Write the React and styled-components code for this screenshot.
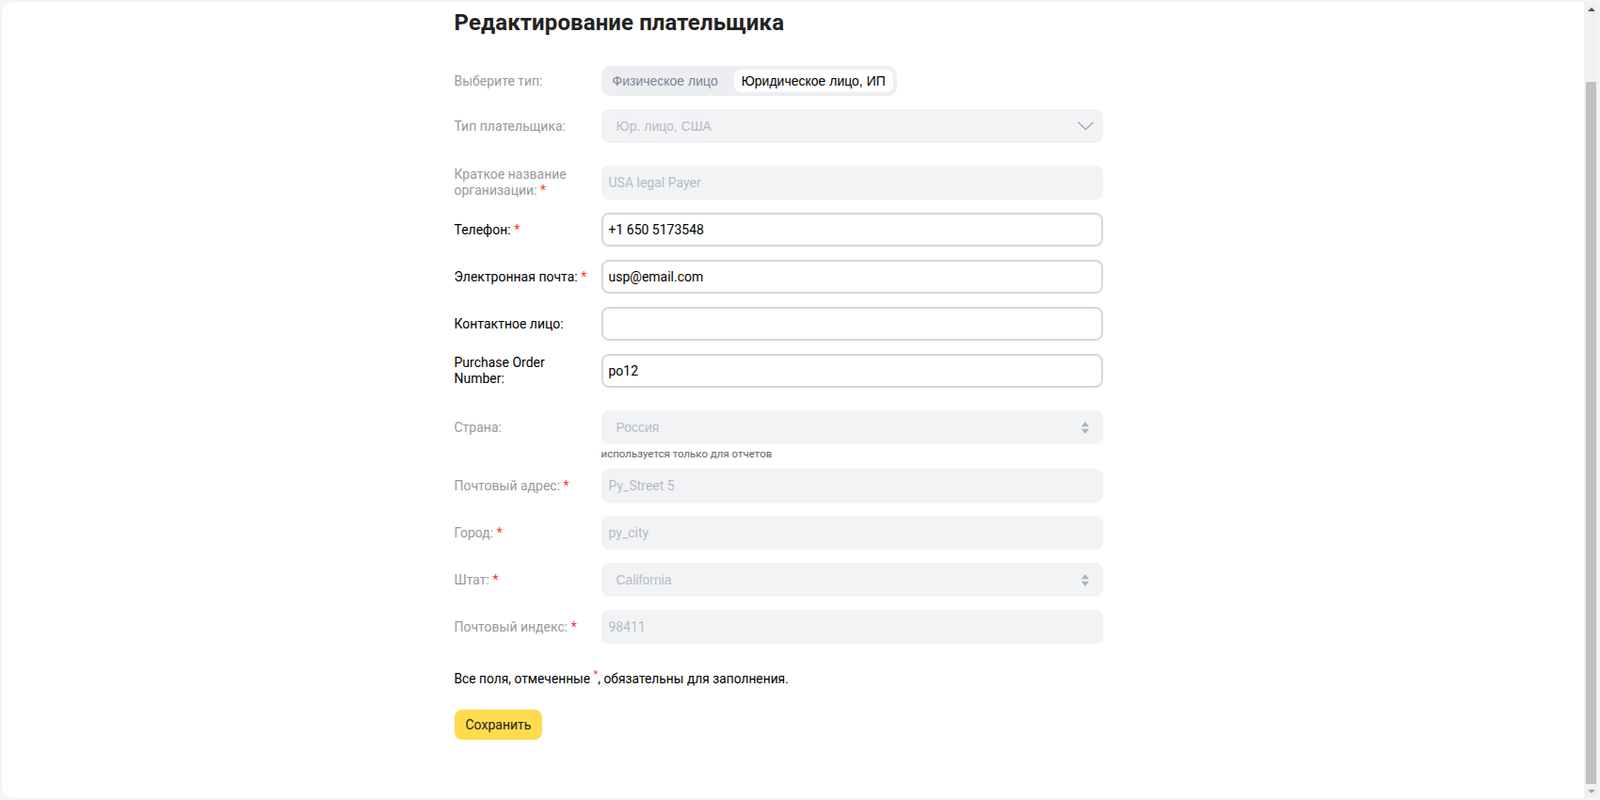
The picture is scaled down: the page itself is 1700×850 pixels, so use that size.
import React, { useLayoutEffect, useRef, useState } from 'react';
import styled, { createGlobalStyle } from 'styled-components';

const GlobalStyle = createGlobalStyle`
  html, body {
    margin: 0;
    height: 100%;
  }
  body {
    background: #f3f4f6;
    font-family: Roboto, "Liberation Sans", Arial, sans-serif;
  }
  #root {
    height: 100%;
  }
`;

const rows = [
  { label: 'Краткое название организации:', value: 'USA legal Payer', required: true, disabled: true, top: 24 },
  { label: 'Телефон:', value: '+1 650 5173548', required: true },
  { label: 'Электронная почта:', value: 'usp@email.com', required: true },
  { label: 'Контактное лицо:', value: '' },
  { label: 'Purchase Order Number:', value: 'po12' },
];

const address = [
  { label: 'Почтовый адрес:', value: 'Py_Street 5', required: true, top: 9 },
  { label: 'Город:', value: 'py_city', required: true },
  { label: 'Штат:', value: 'California', required: true, select: true },
  { label: 'Почтовый индекс:', value: '98411', required: true },
];

function Chevron() {
  return (
    <svg width="17" height="10" viewBox="0 0 17 10" fill="none">
      <path d="M1 1.2l7.5 7.3 7.5-7.3" stroke="#a3a8b8" strokeWidth="1.4" strokeLinecap="round" strokeLinejoin="round" />
    </svg>
  );
}

function UpDown() {
  return (
    <svg width="8" height="13" viewBox="0 0 8 13">
      <path d="M4 0L8 5.2H0z" fill="#aab0bf" />
      <path d="M0 7.8h8L4 13z" fill="#aab0bf" />
    </svg>
  );
}

function Arrow({ down, color }) {
  return (
    <svg width="8" height="4" viewBox="0 0 8 4">
      <path d={down ? 'M0 0h8L4 4z' : 'M4 0L8 4H0z'} fill={color} />
    </svg>
  );
}

// keeps the last word together with the red star so they wrap as one
function LabelText({ text, required }) {
  if (!required) return text;
  const words = text.split(' ');
  const last = words.pop();
  return (
    <>
      {words.length > 0 && words.join(' ') + ' '}
      <NoWrap>
        {last} <Star>*</Star>
      </NoWrap>
    </>
  );
}

export default function App() {
  const scrollRef = useRef(null);
  const trackRef = useRef(null);
  const [thumb, setThumb] = useState({ top: 0, height: 0 });

  const measure = () => {
    const el = scrollRef.current;
    const track = trackRef.current;
    if (!el || !track) return;
    const h = track.clientHeight;
    setThumb({
      top: (el.scrollTop / el.scrollHeight) * h,
      height: (el.clientHeight / el.scrollHeight) * h,
    });
  };

  // the page in the picture is scrolled down to the end
  useLayoutEffect(() => {
    const el = scrollRef.current;
    if (el) el.scrollTop = el.scrollHeight;
    measure();
  }, []);

  return (
    <>
      <GlobalStyle />
      <Panel>
        <Scroller ref={scrollRef} onScroll={measure}>
          <Content>
            <Title>Редактирование плательщика</Title>

            <Row $top={32}>
              <Label $muted>Выберите тип:</Label>
              <Segment>
                <SegItem type="button">Физическое лицо</SegItem>
                <SegItem type="button" $active>Юридическое лицо, ИП</SegItem>
              </Segment>
            </Row>

            <Row>
              <Label $muted>Тип плательщика:</Label>
              <SelectBox $wide>
                <SelectText>Юр. лицо, США</SelectText>
                <Chevron />
              </SelectBox>
            </Row>

            {rows.map(r => (
              <Row key={r.label} $top={r.top}>
                <Label $muted={r.disabled}>
                  <LabelText text={r.label} required={r.required} />
                </Label>
                <Field defaultValue={r.value} disabled={r.disabled} />
              </Row>
            ))}

            <Row $top={24}>
              <Label $muted>Страна:</Label>
              <SelectBox>
                <SelectText>Россия</SelectText>
                <UpDown />
              </SelectBox>
            </Row>
            <Hint>используется только для отчетов</Hint>

            {address.map(r => (
              <Row key={r.label} $top={r.top}>
                <Label $muted>
                  <LabelText text={r.label} required={r.required} />
                </Label>
                {r.select ? (
                  <SelectBox>
                    <SelectText>{r.value}</SelectText>
                    <UpDown />
                  </SelectBox>
                ) : (
                  <Field defaultValue={r.value} disabled />
                )}
              </Row>
            ))}

            <Note>
              Все поля, отмеченные <Sup>*</Sup>, обязательны для заполнения.
            </Note>

            <SaveButton type="button">Сохранить</SaveButton>
          </Content>
        </Scroller>

        <ScrollBar>
          <ArrowButton>
            <Arrow color="#505050" />
          </ArrowButton>
          <Track ref={trackRef}>
            <Thumb style={{ top: thumb.top, height: thumb.height }} />
          </Track>
          <ArrowButton>
            <Arrow down color="#a3a3a3" />
          </ArrowButton>
        </ScrollBar>
      </Panel>
    </>
  );
}

const Panel = styled.div`
  box-sizing: border-box;
  height: calc(100vh - 4px);
  margin: 2px;
  display: flex;
  background: #fff;
  border-radius: 12px 2px 2px 12px;
  overflow: hidden;
`;

const Scroller = styled.div`
  flex: 1;
  min-width: 0;
  overflow-y: auto;
  scrollbar-width: none;

  &::-webkit-scrollbar {
    display: none;
  }
`;

const ScrollBar = styled.div`
  width: 15px;
  flex: none;
  display: flex;
  flex-direction: column;
  background: #f1f1f1;
`;

const ArrowButton = styled.div`
  height: 15px;
  flex: none;
  display: flex;
  align-items: center;
  justify-content: center;
`;

const Track = styled.div`
  position: relative;
  flex: 1;
`;

const Thumb = styled.div`
  position: absolute;
  left: 2px;
  right: 2px;
  background: #c1c1c1;
`;

const Content = styled.div`
  width: 720px;
  margin: 0 auto;
  padding: 87px 0 62px;
`;

const Title = styled.h1`
  margin: 0;
  font: 700 24px/28px Roboto, sans-serif;
  letter-spacing: 0.1px;
  color: #222;
`;

const Row = styled.div`
  display: grid;
  grid-template-columns: 156px 533px;
  align-items: center;
  margin-top: ${p => p.$top ?? 14}px;
`;

const Label = styled.div`
  padding-right: 12px;
  font-size: 14px;
  line-height: 17px;
  color: ${p => (p.$muted ? '#999' : '#000')};
`;

const NoWrap = styled.span`
  white-space: nowrap;
`;

const Star = styled.span`
  color: #f33;
`;

const Segment = styled.div`
  display: inline-flex;
  justify-self: start;
  gap: 9px;
  padding: 4px;
  background: #eceef2;
  border-radius: 10px;
`;

const SegItem = styled.button`
  height: 24px;
  padding: 0 8px;
  border: 0;
  border-radius: 7px;
  font: 14px "Liberation Sans", Arial, sans-serif;
  background: ${p => (p.$active ? '#fff' : 'transparent')};
  color: ${p => (p.$active ? '#000' : '#7d8497')};
  cursor: pointer;
`;

const SelectBox = styled.div`
  box-sizing: border-box;
  height: 36px;
  display: flex;
  align-items: center;
  justify-content: space-between;
  padding: 0 ${p => (p.$wide ? 10 : 15)}px 0 16px;
  background: #f2f3f5;
  border-radius: 8px;
`;

const SelectText = styled.span`
  font: 14px "Liberation Sans", Arial, sans-serif;
  color: #b6bbc9;
`;

const Field = styled.input`
  box-sizing: border-box;
  width: 100%;
  height: 36px;
  margin: 0;
  padding: 0 6px;
  border: 2px solid ${p => (p.disabled ? '#f2f3f5' : '#d5d8e1')};
  border-radius: 8px;
  background: ${p => (p.disabled ? '#f2f3f5' : '#fff')};
  font: 14px Roboto, sans-serif;
  color: #000;
  outline: none;

  &:disabled {
    color: #b6bbc9;
    -webkit-text-fill-color: #b6bbc9;
  }
`;

const Hint = styled.div`
  margin: 3px 0 0 156px;
  font-size: 11.5px;
  line-height: 14px;
  color: #666;
`;

const Note = styled.p`
  margin: 28px 0 0;
  font-size: 13.8px;
  line-height: 18px;
  color: #000;
`;

const Sup = styled.sup`
  color: #f33;
  font-size: 11px;
  line-height: 0;
`;

const SaveButton = styled.button`
  display: block;
  margin-top: 24px;
  height: 32px;
  padding: 0 12px;
  border: 0;
  border-radius: 8px;
  background: #ffdb4d;
  font: 14px Roboto, sans-serif;
  color: #222;
  cursor: pointer;
`;
